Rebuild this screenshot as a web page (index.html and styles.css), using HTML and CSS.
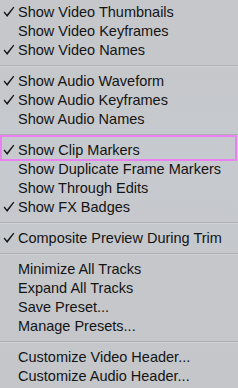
FILE: index.html
```html
<!DOCTYPE html>
<html lang="en">
<head>
  <meta charset="UTF-8">
  <title>Timeline Display Menu</title>
  <link rel="stylesheet" href="styles.css">
</head>
<body>

  <div class="menu">
    <div class="item checked">Show Video Thumbnails</div>
    <div class="item">Show Video Keyframes</div>
    <div class="item checked">Show Video Names</div>
    <div class="sep"></div>
    <div class="item checked">Show Audio Waveform</div>
    <div class="item checked">Show Audio Keyframes</div>
    <div class="item">Show Audio Names</div>
    <div class="sep"></div>
    <div class="item checked marked">Show Clip Markers</div>
    <div class="item">Show Duplicate Frame Markers</div>
    <div class="item">Show Through Edits</div>
    <div class="item checked">Show FX Badges</div>
    <div class="sep"></div>
    <div class="item checked">Composite Preview During Trim</div>
    <div class="sep"></div>
    <div class="item">Minimize All Tracks</div>
    <div class="item">Expand All Tracks</div>
    <div class="item">Save Preset...</div>
    <div class="item">Manage Presets...</div>
    <div class="sep"></div>
    <div class="item">Customize Video Header...</div>
    <div class="item">Customize Audio Header...</div>
  </div>

</body>
</html>
```
FILE: styles.css
```css
body {
  margin: 0;
  padding: 0;
  background-color: #c6c8cb;
  font-family: "Liberation Sans", Arial, sans-serif;
}

.menu {
  width: 238px;
  height: 388px;
  padding-top: 3px;
  box-sizing: border-box;
  background: linear-gradient(#c5c7ca, #c6c9cd 40%, #c4c6c9);
}

.item {
  position: relative;
  height: 19px;
  line-height: 19px;
  padding-left: 18px;
  font-size: 14.5px;
  color: #141414;
  white-space: nowrap;
}

.checked::before {
  content: "";
  position: absolute;
  left: 3px;
  top: 3px;
  width: 12px;
  height: 12px;
  background: url("data:image/svg+xml;utf8,<svg xmlns='http://www.w3.org/2000/svg' width='12' height='12' viewBox='0 0 12 12'><path d='M0.6 6.4 L1.6 5.6 L4 8.6 L10.3 0.8 L11.3 1.5 L4.2 11 Z' fill='%23151515'/></svg>") no-repeat;
}

.marked::after {
  content: "";
  position: absolute;
  left: 0;
  top: -6px;
  width: 237px;
  height: 26px;
  box-sizing: border-box;
  border: 2px solid #ea80f2;
}

.sep {
  height: 12px;
  position: relative;
}

.sep::before {
  content: "";
  position: absolute;
  left: 0;
  right: 0;
  top: 5px;
  height: 1px;
  background-color: #aeb0b3;
  border-bottom: 1px solid #d0d2d5;
}
```
